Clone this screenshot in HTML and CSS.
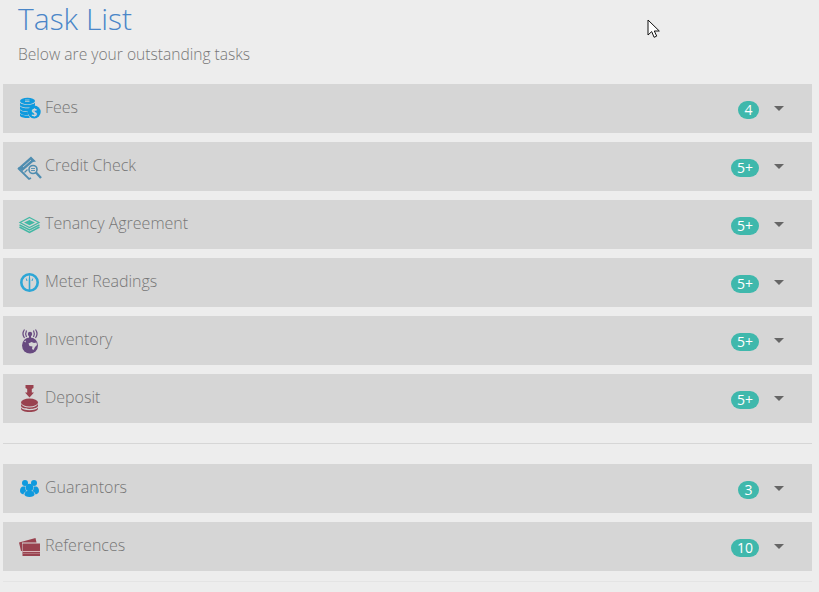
FILE: index.html
```html
<!DOCTYPE html>
<html lang="en">
<head>
<meta charset="utf-8">
<title>Task List</title>
<link rel="stylesheet" href="styles.css">
</head>
<body>
<header class="head">
  <h1 class="title">Task List</h1>
  <p class="sub">Below are your outstanding tasks</p>
</header>
<section class="group">
  <div class="row">
    <svg class="ico" viewBox="0 0 22 29"><g fill="#0f9ade"><ellipse cx="8.500" cy="7" rx="7.500" ry="3.200"/><path d="M1 8.800c1.500 1.400 4 2 7.500 2s6-.6 7.500-2v2.800c-1.500 1.400-4 2-7.500 2s-6-.6-7.500-2z"/><path d="M1 12.300c1.500 1.400 4 2 7.500 2 1 0 1.500 0 2.500-.1l-1.500 3.300c-4 .2-7-.6-8.500-2.200z"/><path d="M1 16c1.500 1.400 4 2 7.800 2l.2 3.100c-4 .1-6.500-.6-8-2.200z"/><path d="M1 19.600c1.500 1.400 4 2 8.500 2l1.300 2.400c-5 .2-8.300-.5-9.800-2z"/><circle cx="15.200" cy="18" r="6.500"/></g><path d="M6 6h4.500M6 7.500h4.500" stroke="#d6d6d6" stroke-width=".7"/><text x="15.200" y="21.500" class="dollar">$</text></svg>
    <span class="label">Fees</span><span class="badge">4</span><span class="caret"></span>
  </div>
  <div class="row">
    <svg class="ico" viewBox="0 0 22 29"><path d="M-1 16 12 4.500l5 5-3 .5-10.500 9z" fill="#4f8db0"/><path d="M4 15l8-7" stroke="#d6d6d6" stroke-width=".8"/><path d="M-1 16l11 11 2-1" fill="none" stroke="#4f8db0" stroke-width="1.800"/><path d="M5.500 20.500l3-3" stroke="#4f8db0" stroke-width="1.300"/><circle cx="14" cy="17.500" r="4" fill="none" stroke="#4f8db0" stroke-width="1.600"/><path d="M12 16.500h4M12 18.500h4" stroke="#4f8db0" stroke-width=".9"/><path d="M17 20.500l5 5.500" stroke="#4f8db0" stroke-width="2.300"/></svg>
    <span class="label">Credit Check</span><span class="badge">5+</span><span class="caret"></span>
  </div>
  <div class="row">
    <svg class="ico" viewBox="0 0 22 29"><path d="M10.500 7.500 20 12.500 10.500 17.500 1 12.500z" fill="none" stroke="#42b8a4" stroke-width="1.200"/><path d="M5 12.500 10.500 10l5.500 2.500-5.500 2.800z" fill="#42b8a4"/><path d="M.5 14.800 10.500 20 20.500 14.800M.5 17 10.500 22.300 20.500 17" fill="none" stroke="#42b8a4" stroke-width="1.500"/></svg>
    <span class="label">Tenancy Agreement</span><span class="badge">5+</span><span class="caret"></span>
  </div>
  <div class="row">
    <svg class="ico" viewBox="0 0 22 29"><circle cx="10.500" cy="14.500" r="8.200" fill="none" stroke="#2da6d6" stroke-width="2.600"/><path d="M9.700 22V12l.5-5h.6l.5 5v10z" fill="#2da6d6"/><path d="M7.300 10.500l.7 2.500M13.700 10.500l-.7 2.500" stroke="#2da6d6" stroke-width="1"/></svg>
    <span class="label">Meter Readings</span><span class="badge">5+</span><span class="caret"></span>
  </div>
  <div class="row">
    <svg class="ico" viewBox="0 0 22 29"><circle cx="11" cy="19.500" r="8" fill="#684a80"/><path d="M9.500 17.500l3-1.500 2.500 1 2.500-.5.500 2.500-2 2-1.500 3-1.500-1 .5-2.500-3-.5zM5 15.500l2-1-.5 2z" fill="#d6d6d6"/><path d="M11 12V7" stroke="#684a80" stroke-width="2"/><circle cx="11" cy="8" r="2.200" fill="#684a80"/><path d="M7.500 4.500c-1 2-1 4.500 0 6.500M5.500 3.500c-1.800 2.500-1.800 6 0 8.500M14.500 4.500c1 2 1 4.500 0 6.500M16.500 3.500c1.800 2.500 1.800 6 0 8.500" fill="none" stroke="#684a80" stroke-width="1.200"/></svg>
    <span class="label">Inventory</span><span class="badge">5+</span><span class="caret"></span>
  </div>
  <div class="row">
    <svg class="ico" viewBox="0 0 22 29"><path d="M6.500 1h8v3l-1.700 1v3.500h2.200l-4.500 5-4.500-5h2.200V5L6.500 4z" fill="#99424f"/><ellipse cx="10.500" cy="18.500" rx="8.500" ry="4" fill="#99424f"/><path d="M2 20v1.600c0 2 3.500 3.400 8.500 3.400s8.500-1.400 8.500-3.400V20c-1 2-4 3.400-8.500 3.400S3 22 2 20z" fill="#99424f"/><path d="M2 23.500v1c0 2 3.500 3.500 8.500 3.500s8.500-1.500 8.500-3.500v-1c-1 1.800-4 2.800-8.500 2.800S3 25.300 2 23.500z" fill="#99424f"/></svg>
    <span class="label">Deposit</span><span class="badge">5+</span><span class="caret"></span>
  </div>
</section>
<hr class="rule">
<section class="group">
  <div class="row">
    <svg class="ico" viewBox="0 0 22 29"><g fill="#0f9ade"><circle cx="6" cy="9" r="3"/><circle cx="15" cy="9" r="3"/><path d="M1 17c0-3 1.500-4.500 3-4.500h2.500c-.6 1.800 0 3.500 1.200 4.500-1.700.7-3 2-3.300 3.500C2.500 20 1 19 1 17zM20 17c0-3-1.500-4.500-3-4.500h-2.500c.6 1.800 0 3.500-1.200 4.500 1.700.7 3 2 3.300 3.500 1.900-.5 3.400-1.500 3.400-3.500z"/><circle cx="10.500" cy="13.500" r="3.800"/><path d="M5.500 20.500c0-2.300 1.500-3.500 3-3.500h4c1.500 0 3 1.200 3 3.500 0 1.500-2.200 2.500-5 2.500s-5-1-5-2.500z"/></g></svg>
    <span class="label">Guarantors</span><span class="badge">3</span><span class="caret"></span>
  </div>
  <div class="row">
    <svg class="ico" viewBox="0 0 22 29"><path d="M0 10.500 16.500 6l1 4.500H3v8.500H2z" fill="#99424f"/><path d="M3.500 11.500H21V24H3.500z" fill="#99424f"/><path d="M3.500 19.500H21" stroke="#d9b4b8" stroke-width="1"/><path d="M3.500 21.500H21" stroke="#b98087" stroke-width=".7"/></svg>
    <span class="label">References</span><span class="badge">10</span><span class="caret"></span>
  </div>
</section>
<hr class="rule end">
<svg class="cursor" viewBox="0 0 14 21" width="14" height="21"><path d="M1 1v15l3.700-3.400 2.400 5.700 2.600-1.200L7.300 12h5z" fill="#fff" stroke="#111" stroke-width="1"/></svg>
</body>
</html>
```
FILE: styles.css
```css
html, body {
  margin: 0;
  height: 592px;
  overflow: hidden;
}
body {
  position: relative;
  background: #ededed;
  font-family: "Open Sans", sans-serif;
  font-weight: 300;
  padding: 0 7px 0 3px;
}
.head {
  padding: 0 0 0 15px;
  height: 84px;
}
.title {
  margin: 0;
  font-size: 30px;
  line-height: 38px;
  font-weight: 300;
  color: #4a86c8;
}
.sub {
  margin: 6px 0 0;
  font-size: 15.6px;
  line-height: 20px;
  color: #777;
}
.group {
  display: flex;
  flex-direction: column;
  gap: 9px;
}
.row {
  height: 49px;
  display: flex;
  align-items: center;
  background: #d6d6d6;
  padding: 0 28px 0 16px;
  color: #777;
}
.ico {
  width: 22px;
  height: 29px;
  flex: none;
  margin: 0 4px 0 0;
  overflow: visible;
}
.label {
  font-size: 16px;
  line-height: 22px;
  flex: 1;
  position: relative;
  top: -2px;
}
.badge {
  box-sizing: border-box;
  min-width: 21px;
  height: 18px;
  padding: 0 6px;
  border-radius: 9px;
  background: #3fb8ac;
  color: #fff;
  font-size: 14px;
  font-weight: 400;
  line-height: 18px;
  text-align: center;
  position: relative;
  top: 1px;
}
.caret {
  width: 0;
  height: 0;
  margin-left: 15px;
  border: 5px solid transparent;
  border-top-color: #666;
  border-bottom: 0;
}
.rule {
  margin: 20px 0;
  border: 0;
  border-top: 1px solid #d6d6d6;
}
.rule.end {
  margin: 10px 0 0;
  border-top-color: #e4e4e4;
}
.dollar {
  font-family: "Open Sans", sans-serif;
  font-size: 10px;
  font-weight: 700;
  fill: #d6d6d6;
  text-anchor: middle;
}
.cursor {
  position: absolute;
  left: 647px;
  top: 19px;
}
```
